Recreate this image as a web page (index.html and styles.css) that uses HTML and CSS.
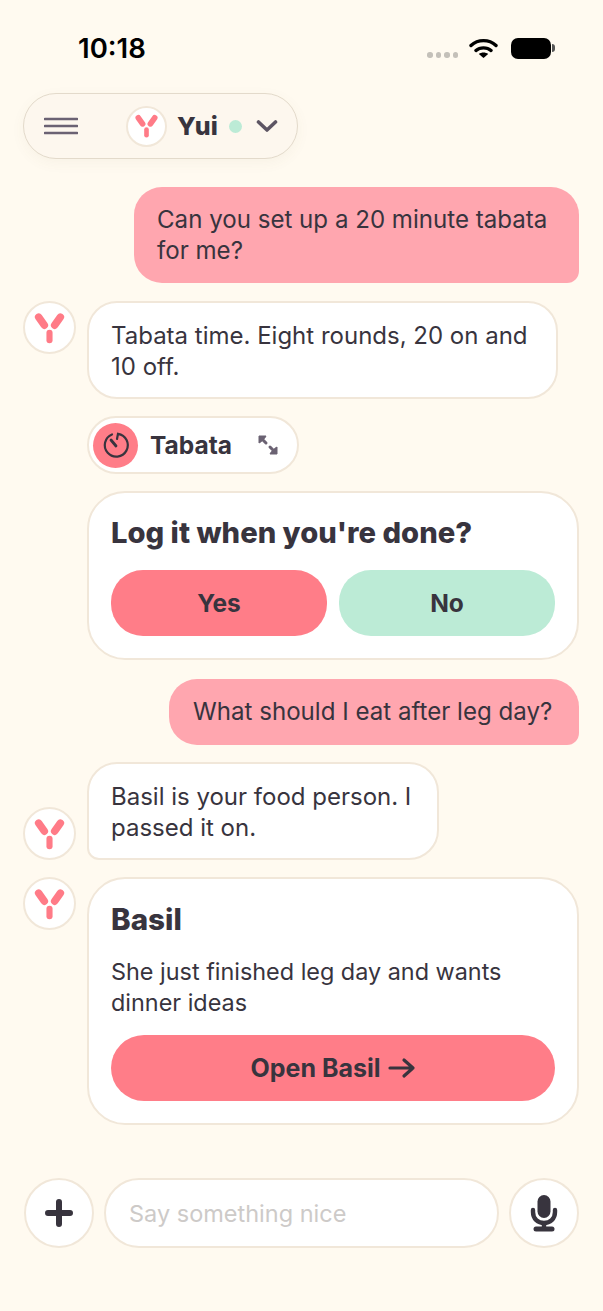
FILE: index.html
```html
<!DOCTYPE html>
<html lang="en">
<head>
  <meta charset="UTF-8">
  <meta name="viewport" content="width=device-width, initial-scale=1.0">
  <title>Yui Chat</title>
  <link rel="stylesheet" href="styles.css">
</head>
<body>
  <svg class="defs" width="0" height="0">
    <symbol id="yui-logo" viewBox="-26 -26 52 52">
      <path d="M-11.5 -11.5 L-5.5 -3 M11.5 -11.5 L5.5 -3" stroke="#ff7b87" stroke-width="8" stroke-linecap="round" fill="none"/>
      <path d="M0 5 V13" stroke="#ff7b87" stroke-width="6.5" stroke-linecap="round" fill="none"/>
    </symbol>
  </svg>

  <div class="status-bar">
    <span class="clock">10:18</span>
    <div class="status-icons">
      <div class="signal"><i></i><i></i><i></i><i></i></div>
      <svg class="wifi" width="29" height="22" viewBox="0 0 29 22">
        <path d="M2 8.5 C9 2 20 2 27 8.5 M7 13.5 C11 10 18 10 22 13.5" stroke="#000" stroke-width="3.4" stroke-linecap="round" fill="none"/>
        <path d="M14.5 21 L9.8 17 C12.5 15 16.5 15 19.2 17 Z" fill="#000"/>
      </svg>
      <div class="battery"><div class="battery-body"></div><div class="battery-cap"></div></div>
    </div>
  </div>

  <header class="top-pill">
    <svg class="menu-icon" width="34" height="18" viewBox="0 0 34 18">
      <path d="M1 2 H33 M1 9 H33 M1 16 H33" stroke="#6b6273" stroke-width="2.6" stroke-linecap="round"/>
    </svg>
    <div class="avatar avatar-small"><svg width="44" height="44"><use href="#yui-logo"/></svg></div>
    <span class="agent-name">Yui</span>
    <span class="online-dot"></span>
    <svg class="chevron" width="22" height="14" viewBox="0 0 22 14">
      <path d="M2.5 3 L11 11 L19.5 3" stroke="#5d5563" stroke-width="3.6" stroke-linecap="round" stroke-linejoin="round" fill="none"/>
    </svg>
  </header>

  <main class="thread">
    <div class="bubble user-bubble first-bubble">Can you set up a 20 minute tabata for me?</div>

    <div class="row row-after-user">
      <div class="avatar"><svg width="50" height="50"><use href="#yui-logo"/></svg></div>
      <div class="bubble agent-bubble short-bubble">Tabata time. Eight rounds, 20 on and 10 off.</div>
    </div>

    <div class="indented">
      <div class="chip">
        <div class="chip-icon">
          <svg width="30" height="30" viewBox="0 0 30 30">
            <path d="M11 4.5 A11.5 11.5 0 1 0 17 3.8 L16 9" stroke="#38343e" stroke-width="2.2" stroke-linecap="round" fill="none"/>
            <path d="M10 10 L15 16" stroke="#38343e" stroke-width="2.8" stroke-linecap="round"/>
          </svg>
        </div>
        <span class="chip-label">Tabata</span>
        <svg class="expand-icon" width="22" height="22" viewBox="0 0 22 22">
          <path d="M2 9 V2 H9 L7.5 4.5 H4.5 V7.5 Z M20 13 V20 H13 L14.5 17.5 H17.5 V14.5 Z" fill="#6b6273" stroke="#6b6273" stroke-width="1" stroke-linejoin="round"/>
          <path d="M4 4 L9 9 M18 18 L13 13" stroke="#6b6273" stroke-width="3" stroke-linecap="round"/>
        </svg>
      </div>
    </div>

    <div class="indented">
      <div class="card question-card">
        <h2 class="card-title">Log it when you're done?</h2>
        <div class="choice-row">
          <button class="btn btn-coral">Yes</button>
          <button class="btn btn-mint">No</button>
        </div>
      </div>
    </div>

    <div class="bubble user-bubble second-user">What should I eat after leg day?</div>

    <div class="row row-bottom">
      <div class="avatar"><svg width="50" height="50"><use href="#yui-logo"/></svg></div>
      <div class="bubble agent-bubble tail-bubble">Basil is your food person. I passed it on.</div>
    </div>

    <div class="row">
      <div class="avatar"><svg width="50" height="50"><use href="#yui-logo"/></svg></div>
      <div class="card basil-card">
        <h2 class="card-title basil-title">Basil</h2>
        <p class="card-text">She just finished leg day and wants dinner ideas</p>
        <button class="btn btn-coral btn-wide">Open Basil
          <svg width="28" height="22" viewBox="0 0 28 22">
            <path d="M2 11 H25 M16 3 L25 11 L16 19" stroke="#38343e" stroke-width="3.2" stroke-linecap="round" stroke-linejoin="round" fill="none"/>
          </svg>
        </button>
      </div>
    </div>
  </main>

  <footer class="composer">
    <button class="round-btn">
      <svg width="28" height="28" viewBox="0 0 28 28">
        <path d="M14 3 V25 M3 14 H25" stroke="#38343e" stroke-width="6" stroke-linecap="round"/>
      </svg>
    </button>
    <div class="composer-input">Say something nice</div>
    <button class="round-btn">
      <svg width="28" height="38" viewBox="0 0 28 38">
        <rect x="7.5" y="1" width="13" height="23" rx="6.5" fill="#38343e"/>
        <path d="M3 16 V18 C3 25 8 29 14 29 C20 29 25 25 25 18 V16" stroke="#38343e" stroke-width="4.4" stroke-linecap="round" fill="none"/>
        <path d="M14 29 V34" stroke="#38343e" stroke-width="4.4"/>
        <path d="M6 35 H22" stroke="#38343e" stroke-width="5" stroke-linecap="round"/>
      </svg>
    </button>
  </footer>
</body>
</html>
```

FILE: styles.css
```css
* {
  box-sizing: border-box;
}

body {
  font-family: Inter, "Liberation Sans", sans-serif;
  margin: 0;
  width: 603px;
  height: 1311px;
  overflow: hidden;
  padding: 0 24px;
  background-color: #fffaf0;
  color: #38343e;
}

.defs {
  position: absolute;
}

/* Status bar */
.status-bar {
  height: 93px;
  padding: 32px 0 0 54px;
  display: flex;
  justify-content: space-between;
  align-items: flex-start;
}

.clock {
  font-size: 27.5px;
  line-height: 32px;
  font-weight: 600;
  color: #000;
}

.status-icons {
  display: flex;
  align-items: center;
  gap: 13px;
  margin-right: 24px;
  height: 32px;
}

.signal {
  display: flex;
  gap: 3px;
  margin-top: 14px;
}

.signal i {
  width: 5.5px;
  height: 5.5px;
  border-radius: 50%;
  background: #c4c0b9;
}

.wifi {
  margin-left: -2px;
}

.battery {
  display: flex;
  align-items: center;
  gap: 1px;
}

.battery-body {
  width: 40px;
  height: 21px;
  background: #000;
  border-radius: 7px;
}

.battery-cap {
  width: 3px;
  height: 8px;
  background: #555;
  border-radius: 0 3px 3px 0;
}

/* Header pill */
.top-pill {
  width: 275px;
  height: 66px;
  margin-left: -1px;
  padding: 0 18px 0 20px;
  display: flex;
  align-items: center;
  background: #fdf7ee;
  border: 1px solid #e3dacb;
  border-radius: 33px;
  box-shadow: 0 4px 14px rgba(120, 90, 50, 0.05);
}

.menu-icon {
  margin-right: 48px;
}

.avatar {
  flex: 0 0 auto;
  width: 53px;
  height: 53px;
  border-radius: 50%;
  background: #fff;
  border: 2px solid #f1e7d9;
  display: flex;
  align-items: center;
  justify-content: center;
}

.avatar-small {
  width: 41px;
  height: 41px;
}

.agent-name {
  margin-left: 10px;
  font-size: 25px;
  font-weight: 800;
}

.online-dot {
  width: 13px;
  height: 13px;
  margin-left: 11px;
  border-radius: 50%;
  background: #bcebd6;
}

.chevron {
  margin-left: 14px;
}

/* Thread */
.thread {
  display: flex;
  flex-direction: column;
  gap: 17px;
}

.bubble {
  font-size: 24px;
  line-height: 31px;
  padding: 17px 22px;
}

.user-bubble {
  align-self: flex-end;
  background: #ffa6af;
  border-radius: 28px 28px 12px 28px;
  font-size: 24.1px;
}

.first-bubble {
  width: 445px;
  margin-top: 28px;
  padding-left: 23px;
}

.second-user {
  width: 410px;
  height: 66px;
  margin-top: 2px;
  padding-left: 24px;
}

.row {
  display: flex;
  align-items: flex-start;
  gap: 11px;
  margin-left: -1px;
}

.row-after-user {
  margin-top: 1px;
}

.row-bottom {
  align-items: flex-end;
}

.agent-bubble {
  background: #fff;
  border: 2px solid #f1e7d9;
  border-radius: 30px;
}

.short-bubble {
  width: 471px;
  height: 98px;
}

.tail-bubble {
  width: 352px;
  height: 98px;
  border-radius: 30px 30px 30px 12px;
}

.indented {
  margin-left: 63px;
}

.chip {
  width: 212px;
  height: 58px;
  padding: 0 0 0 4px;
  display: flex;
  align-items: center;
  background: #fff;
  border: 2px solid #f1e7d9;
  border-radius: 29px;
}

.chip-icon {
  width: 45px;
  height: 45px;
  border-radius: 50%;
  background: #ff7d88;
  display: flex;
  align-items: center;
  justify-content: center;
}

.chip-label {
  margin-left: 12px;
  font-size: 24.5px;
  font-weight: 700;
  white-space: nowrap;
}

.expand-icon {
  margin-left: 25px;
}

.card {
  background: #fff;
  border: 2px solid #f1e7d9;
  border-radius: 38px;
  padding: 21px 22px 22px;
}

.question-card {
  width: 492px;
  height: 169px;
}

.card-title {
  margin: 0;
  font-size: 29.2px;
  line-height: 38px;
  font-weight: 800;
}

.choice-row {
  display: flex;
  gap: 12px;
  margin-top: 18px;
}

.btn {
  height: 66px;
  flex: 1;
  border: none;
  border-radius: 32px;
  font-family: inherit;
  font-size: 24.5px;
  font-weight: 700;
  color: #38343e;
  padding: 0;
  display: flex;
  align-items: center;
  justify-content: center;
  gap: 7px;
}

.btn-coral {
  background: #ff7d88;
}

.btn-mint {
  background: #bcebd6;
}

.btn-wide {
  width: 100%;
  font-size: 25px;
  border-radius: 33px;
}

.basil-card {
  width: 492px;
  height: 248px;
}

.basil-title {
  font-size: 29.6px;
}

.card-text {
  margin: 18px 0 17px;
  font-size: 23.4px;
  line-height: 31px;
}

/* Composer */
.composer {
  margin-top: 53px;
  display: flex;
  align-items: center;
  gap: 10px;
}

.round-btn {
  flex: 0 0 auto;
  width: 70px;
  height: 70px;
  padding: 0;
  border-radius: 50%;
  background: #fff;
  border: 2px solid #f1e7d9;
  display: flex;
  align-items: center;
  justify-content: center;
}

.composer-input {
  flex: 1;
  height: 70px;
  padding: 0 23px;
  display: flex;
  align-items: center;
  background: #fff;
  border: 2px solid #f1e7d9;
  border-radius: 35px;
  font-size: 23.5px;
  color: #cdcac8;
}
```
